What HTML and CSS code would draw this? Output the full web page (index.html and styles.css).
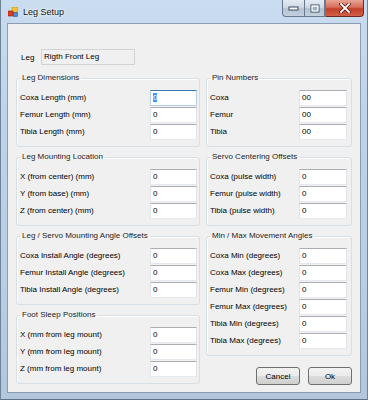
FILE: index.html
```html
<!DOCTYPE html>
<html lang="en">
<head>
    <meta charset="UTF-8">
    <meta name="viewport" content="width=device-width, initial-scale=1.0">
    <title>Leg Setup</title>
    <link rel="stylesheet" href="styles.css">
</head>
<body>
    <div class="window">
        <div class="titlebar">
            <svg class="app-icon" width="10" height="10" viewBox="0 0 10 10">
                <rect x="4" y="0" width="6" height="6" fill="#f4c52e" stroke="#b98a10" stroke-width="0.6"/>
                <rect x="5.5" y="5.5" width="4" height="4" fill="#4b8bd9" stroke="#2a5a9a" stroke-width="0.6"/>
                <rect x="0" y="4" width="5" height="5" fill="#dd3b22" stroke="#902010" stroke-width="0.6"/>
            </svg>
            <span class="title">Leg Setup</span>
            <div class="caption-buttons">
                <div class="cap cap-min">
                    <svg width="11" height="5" viewBox="0 0 11 5"><rect x="1" y="1" width="9" height="3" fill="#fff" stroke="#3d4a5a" stroke-width="1"/></svg>
                </div>
                <div class="cap cap-max">
                    <svg width="10" height="9" viewBox="0 0 10 9"><rect x="1" y="1" width="8" height="7" fill="none" stroke="#3d4a5a" stroke-width="1"/><rect x="2" y="2" width="6" height="5" fill="none" stroke="#fff" stroke-width="1"/><rect x="3" y="3" width="4" height="3" fill="#9fb0c4"/></svg>
                </div>
                <div class="cap cap-close">
                    <svg width="12" height="10" viewBox="0 0 12 10"><path d="M2 1 L10 9 M10 1 L2 9" stroke="#5a1a12" stroke-width="3.4" stroke-linecap="square"/><path d="M2 1 L10 9 M10 1 L2 9" stroke="#fff" stroke-width="1.8" stroke-linecap="square"/></svg>
                </div>
            </div>
        </div>

        <div class="client">
            <div class="leg-row">
                <span class="leg-label">Leg</span>
                <div class="leg-box">Rigth Front Leg</div>
            </div>

            <div class="columns">
                <div class="col col-left">
                    <fieldset class="group">
                        <legend>Leg Dimensions</legend>
                        <div class="rows">
                            <span>Coxa Length (mm)</span><div class="field focused"><span class="sel">0</span></div>
                            <span>Femur Length (mm)</span><div class="field">0</div>
                            <span>Tibia Length (mm)</span><div class="field">0</div>
                        </div>
                    </fieldset>
                    <fieldset class="group">
                        <legend>Leg Mounting Location</legend>
                        <div class="rows">
                            <span>X (from center) (mm)</span><div class="field">0</div>
                            <span>Y (from base) (mm)</span><div class="field">0</div>
                            <span>Z (from center) (mm)</span><div class="field">0</div>
                        </div>
                    </fieldset>
                    <fieldset class="group">
                        <legend>Leg / Servo Mounting Angle Offsets</legend>
                        <div class="rows">
                            <span>Coxa Install Angle (degrees)</span><div class="field">0</div>
                            <span>Femur Install Angle (degrees)</span><div class="field">0</div>
                            <span>Tibia Install Angle (degrees)</span><div class="field">0</div>
                        </div>
                    </fieldset>
                    <fieldset class="group">
                        <legend>Foot Sleep Positions</legend>
                        <div class="rows">
                            <span>X (mm from leg mount)</span><div class="field">0</div>
                            <span>Y (mm from leg mount)</span><div class="field">0</div>
                            <span>Z (mm from leg mount)</span><div class="field">0</div>
                        </div>
                    </fieldset>
                </div>

                <div class="col col-right">
                    <fieldset class="group">
                        <legend>Pin Numbers</legend>
                        <div class="rows">
                            <span>Coxa</span><div class="field">00</div>
                            <span>Femur</span><div class="field">00</div>
                            <span>Tibia</span><div class="field">00</div>
                        </div>
                    </fieldset>
                    <fieldset class="group">
                        <legend>Servo Centering Offsets</legend>
                        <div class="rows">
                            <span>Coxa (pulse width)</span><div class="field">0</div>
                            <span>Femur (pulse width)</span><div class="field">0</div>
                            <span>Tibia (pulse width)</span><div class="field">0</div>
                        </div>
                    </fieldset>
                    <fieldset class="group">
                        <legend>Min / Max Movement Angles</legend>
                        <div class="rows">
                            <span>Coxa Min (degrees)</span><div class="field">0</div>
                            <span>Coxa Max (degrees)</span><div class="field">0</div>
                            <span>Femur Min (degrees)</span><div class="field">0</div>
                            <span>Femur Max (degrees)</span><div class="field">0</div>
                            <span>Tibia Min (degrees)</span><div class="field">0</div>
                            <span>Tibia Max (degrees)</span><div class="field">0</div>
                        </div>
                    </fieldset>
                    <div class="buttons">
                        <button class="btn">Cancel</button>
                        <button class="btn">Ok</button>
                    </div>
                </div>
            </div>
        </div>
    </div>
</body>
</html>
```

FILE: styles.css
```css
body {
    margin: 0;
    font-family: "Liberation Sans", Arial, sans-serif;
    font-size: 8px;
    color: #000;
}
.window {
    width: 368px;
    height: 400px;
    box-sizing: border-box;
    display: flex;
    flex-direction: column;
    background: linear-gradient(180deg, #cadcef 0%, #bdd1e7 35%, #b9cde3 70%, #b2c6dc 100%);
    border-left: 1px solid #6f8399;
    border-right: 1px solid #6f8399;
    border-bottom: 1px solid #5e7186;
}
.titlebar {
    height: 23px;
    flex-shrink: 0;
    display: flex;
    align-items: flex-start;
    padding: 0 3px 0 7px;
    box-sizing: border-box;
}
.app-icon {
    margin-top: 7px;
}
.title {
    font-size: 9px;
    line-height: 11px;
    margin: 7px 0 0 5px;
    color: #111;
    text-shadow: 0 0 4px #fff, 0 0 2px #fff;
}
.caption-buttons {
    margin-left: auto;
    display: flex;
    height: 17px;
}
.cap {
    display: flex;
    align-items: center;
    justify-content: center;
    box-sizing: border-box;
    border: 1px solid #66798e;
    border-top: none;
}
.cap-min {
    width: 22px;
    border-radius: 0 0 0 4px;
    border-right: none;
    background: linear-gradient(180deg, #e3eaf2 0%, #cfdae6 45%, #b4c2d2 55%, #c3d0de 100%);
}
.cap-max {
    width: 21px;
    background: linear-gradient(180deg, #e3eaf2 0%, #cfdae6 45%, #b4c2d2 55%, #c3d0de 100%);
}
.cap-close {
    width: 39px;
    border-color: #6e2b22;
    border-left-color: #66798e;
    border-radius: 0 0 4px 0;
    background: linear-gradient(180deg, #e9a597 0%, #d86d5a 45%, #c33f2a 55%, #d2604a 100%);
}
.client {
    flex: 1;
    margin: 0 6px 6px;
    border: 1px solid #8a9db2;
    background: #f0f0f0;
    padding: 25px 8px 0;
}
.leg-row {
    display: flex;
    align-items: center;
    padding-left: 5px;
}
.leg-label {
    width: 20px;
}
.leg-box {
    width: 94px;
    height: 16px;
    box-sizing: border-box;
    border: 1px solid #d3d3d3;
    background: #f0f0f0;
    padding: 0 2px;
    line-height: 14px;
}
.columns {
    display: flex;
    gap: 6px;
    margin-top: 8px;
}
.col {
    display: flex;
    flex-direction: column;
    gap: 5px;
}
.col-left {
    width: 184px;
}
.col-right {
    width: 146px;
}
.group {
    margin: 0;
    padding: 7px 2px 6px 3px;
    border: 1px solid #d5dfe5;
    border-radius: 3px;
    min-width: 0;
    box-shadow: inset 1px 1px 0 #fff;
}
.group legend {
    padding: 0 2px;
    line-height: 10px;
    color: #1c1c1c;
}
.rows {
    display: grid;
    grid-template-columns: 1fr 47px;
    row-gap: 1px;
    align-items: center;
    line-height: 16px;
}
.col-right .group {
    padding-right: 4px;
}
.col-right .rows {
    grid-template-columns: 1fr 48px;
}
.field {
    height: 16px;
    box-sizing: border-box;
    border: 1px solid #e2e3ea;
    border-top-color: #abadb3;
    border-bottom-color: #e3e9ef;
    background: #fff;
    padding: 0 2px;
    line-height: 14px;
}
.field.focused {
    border-color: #b5cfe7;
    border-top-color: #3d7bad;
}
.sel {
    background: #3399ff;
    color: #fff;
}
.buttons {
    display: flex;
    justify-content: flex-end;
    gap: 8px;
    margin-top: 6px;
}
.btn {
    width: 44px;
    height: 18px;
    padding: 0;
    border: 1px solid #707070;
    border-radius: 3px;
    background: linear-gradient(180deg, #f2f2f2 0%, #ebebeb 50%, #dddddd 50%, #cfcfcf 100%);
    font-family: "Liberation Sans", Arial, sans-serif;
    font-size: 8px;
    color: #000;
}
```
